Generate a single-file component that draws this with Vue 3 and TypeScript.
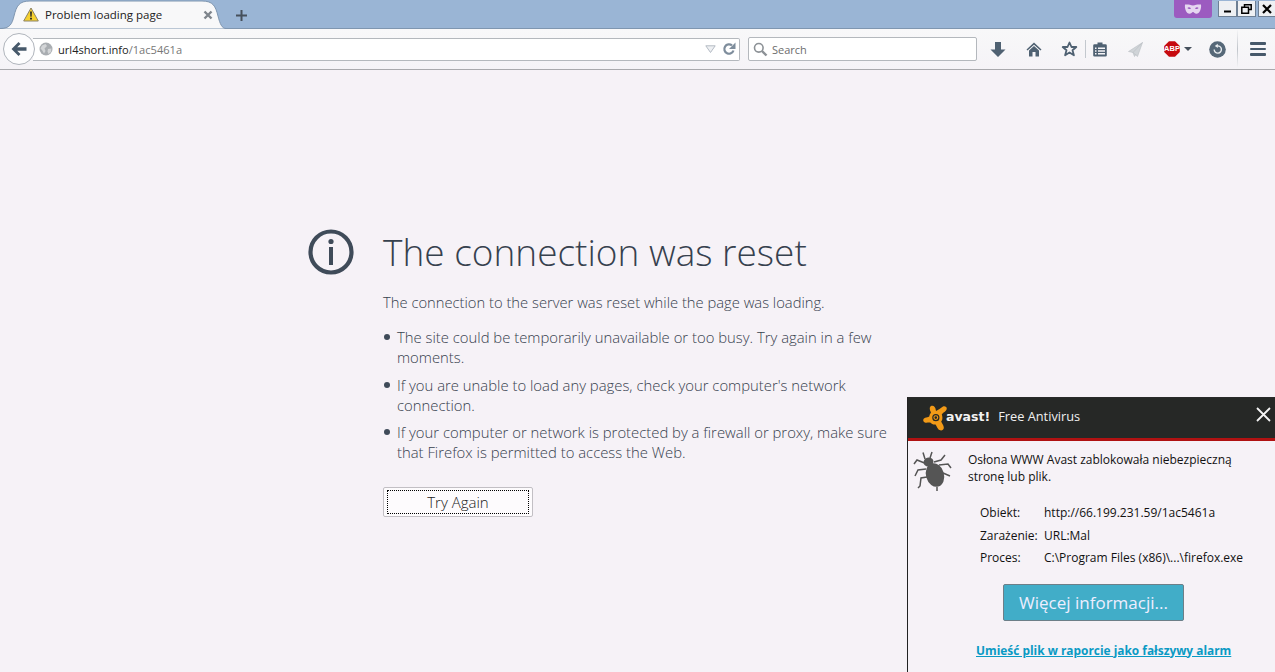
<script setup lang="ts">
const causes: string[] = [
  'The site could be temporarily unavailable or too busy. Try again in a few moments.',
  "If you are unable to load any pages, check your computer's network connection.",
  'If your computer or network is protected by a firewall or proxy, make sure that Firefox is permitted to access the Web.',
]
const details: [string, string][] = [
  ['Obiekt:', 'http://66.199.231.59/1ac5461a'],
  ['Zarażenie:', 'URL:Mal'],
  ['Proces:', 'C:\\Program Files (x86)\\...\\firefox.exe'],
]
</script>

<template>
  <div class="window">
    <header class="tabstrip">
      <div class="tab">
        <svg class="tab-shape" width="226" height="29" viewBox="0 0 226 29">
          <path d="M0 28.5C10 28.5 12 24 14 16C16.5 6 19 1 30 1H202C213 1 215.5 6 218 16C220 24 222 28.5 226 28.5" fill="#f8f8f9" stroke="#7f96b0" />
        </svg>
        <svg class="warn" width="16" height="15" viewBox="0 0 16 15">
          <path d="M8 1L15.3 14H.7Z" fill="#f6d12f" stroke="#8a8266" stroke-linejoin="round" />
          <path d="M7.1 4.6H8.9L8.6 9.8H7.4ZM7.1 10.8H8.9V12.5H7.1Z" fill="#222" />
        </svg>
        <span class="tab-title">Problem loading page</span>
        <svg class="tab-close" width="10" height="10" viewBox="0 0 10 10">
          <path d="M1.5 1.5L8.5 8.5M8.5 1.5L1.5 8.5" stroke="#7f858c" stroke-width="2.4" />
        </svg>
      </div>
      <svg class="newtab" width="11" height="11" viewBox="0 0 11 11">
        <path d="M5.5 0V11M0 5.5H11" stroke="#46505c" stroke-width="2" />
      </svg>
      <div class="win-spacer"></div>
      <div class="private">
        <svg width="18" height="10" viewBox="0 0 18 10">
          <path fill-rule="evenodd" d="M1 .6C4 .2 6.5 1 9 1.6C11.5 1 14 .2 17 .6C17.6 5 15.6 9.8 12.4 9.8C10.8 9.8 10 8 9 8C8 8 7.2 9.8 5.6 9.8C2.4 9.8 .4 5 1 .6ZM3.4 4C4.2 3 6 3 7 4.4C5.8 5.4 4.2 5.2 3.4 4ZM14.6 4C13.8 3 12 3 11 4.4C12.2 5.4 13.8 5.2 14.6 4Z" fill="#e6d6f0" />
        </svg>
      </div>
      <div class="caption">
        <button class="cap-btn">
          <svg width="9" height="9" viewBox="0 0 9 9"><path d="M1 7.5H8" stroke="#000" stroke-width="2" /></svg>
        </button>
        <button class="cap-btn">
          <svg width="11" height="10" viewBox="0 0 11 10"><path d="M3.5 2.5V.8H10.2V5.5H8M.8 3.2H7.5V9.2H.8Z" fill="none" stroke="#000" stroke-width="1.5" /></svg>
        </button>
        <button class="cap-btn cap-close">
          <svg width="10" height="10" viewBox="0 0 10 10"><path d="M1 1L9 9M9 1L1 9" stroke="#000" stroke-width="2.2" /></svg>
        </button>
      </div>
    </header>

    <nav class="toolbar">
      <button class="back">
        <svg width="16" height="14" viewBox="0 0 16 14"><path d="M7.5 0L.5 7L7.5 14L9.5 12L6.2 8.7H15.5V5.3H6.2L9.5 2Z" fill="#46586a" /></svg>
      </button>
      <div class="urlbar">
        <svg class="globe" width="14" height="14" viewBox="0 0 14 14">
          <circle cx="7" cy="7" r="6.5" fill="#a9adb1" />
          <path d="M3 3.5L6.5 2L8 4L5.5 6.5L6.5 9L5 11.5L3 8L1.5 6.5ZM9 7L12.5 6.5L12 10L9.5 12L8.5 9.5Z" fill="#d3d5d7" />
        </svg>
        <span class="host">url4short.info</span><span class="path">/1ac5461a</span>
        <span class="url-grow"></span>
        <svg class="drop" width="11" height="8" viewBox="0 0 11 8"><path d="M.8.8H10.2L5.5 7.5Z" fill="#eef0f3" stroke="#b4bbc4" /></svg>
        <svg class="reload" width="14" height="14" viewBox="0 0 14 14">
          <path d="M11.5 8.5A4.7 4.7 0 1 1 10 3.4" fill="none" stroke="#7e8d9c" stroke-width="2.2" />
          <path d="M13.5 .5V7H7Z" fill="#7e8d9c" />
        </svg>
      </div>
      <div class="searchbar">
        <svg width="15" height="15" viewBox="0 0 15 15">
          <circle cx="5.8" cy="5.8" r="4.3" fill="none" stroke="#8c9196" stroke-width="1.6" />
          <path d="M9 9L13.5 13.5" stroke="#8c9196" stroke-width="2.4" />
        </svg>
        <span>Search</span>
      </div>
      <div class="tools">
        <svg class="t t-down" width="16" height="17" viewBox="0 0 16 17"><path d="M5 1H11V8.5H15.5L8 16L.5 8.5H5Z" fill="#4f6172" /></svg>
        <svg class="t t-home" width="16" height="15" viewBox="0 0 16 15"><path d="M8 .5L15.5 7.5L14.5 8.5L8 2.7L1.5 8.5L.5 7.5Z" fill="#4f6172" /><path d="M3 8.5L8 4L13 8.5V14.5H9.5V10H6.5V14.5H3Z" fill="#4f6172" /></svg>
        <svg class="t t-star" width="17" height="16" viewBox="0 0 17 16"><path d="M8.5 1.5L10.5 6H15.3L11.5 9.2L12.9 14.3L8.5 11.5L4.1 14.3L5.5 9.2L1.7 6H6.5Z" fill="none" stroke="#4f6172" stroke-width="1.8" stroke-linejoin="round" /></svg>
        <span class="t-sep"></span>
        <svg class="t t-list" width="14" height="15" viewBox="0 0 14 15"><path fill-rule="evenodd" d="M4.5 2.2V.5H9.5V2.2H12.5Q13.8 2.2 13.8 3.5V13.5Q13.8 14.5 12.5 14.5H1.5Q.2 14.5 .2 13.5V3.5Q.2 2.2 1.5 2.2ZM2 5.5V7H3.5V5.5ZM2 8.2V9.7H3.5V8.2ZM2 10.9V12.4H3.5V10.9ZM5 5.5V7H12V5.5ZM5 8.2V9.7H12V8.2ZM5 10.9V12.4H12V10.9Z" fill="#4f6172" /></svg>
        <svg class="t t-send" width="15" height="15" viewBox="0 0 15 15"><path d="M14.5 .5L.5 9.5L5 10.5L9.5 14.5ZM14.5 .5L5 10.5L6.5 14.5L7.8 12.5" fill="#d0d4d8" stroke="#b8bdc3" stroke-width=".6" /></svg>
        <div class="t t-abp">
          <svg width="16" height="16" viewBox="0 0 16 16"><path d="M5 .2H11L15.8 5V11L11 15.8H5L.2 11V5Z" fill="#c60a0f" /></svg>
          <span class="abp-label">ABP</span>
        </div>
        <svg class="t-caret" width="8" height="4" viewBox="0 0 8 4"><path d="M0 0H8L4 4Z" fill="#46505c" /></svg>
        <svg class="t t-hist" width="17" height="17" viewBox="0 0 17 17">
          <circle cx="8.5" cy="8.5" r="8.3" fill="#566878" />
          <path d="M5.2 8.5A3.6 3.6 0 1 0 8 5" fill="none" stroke="#e9edf0" stroke-width="1.4" />
          <path d="M8.8 2.8V7L5.8 5Z" fill="#e9edf0" />
        </svg>
        <span class="t-sep2"></span>
        <div class="t-menu"><i></i><i></i><i></i></div>
      </div>
    </nav>

    <main class="page">
      <div class="error">
        <svg class="info" width="46" height="46" viewBox="0 0 46 46">
          <circle cx="23" cy="23" r="20.5" fill="none" stroke="#3f4b59" stroke-width="4.2" />
          <circle cx="23" cy="12.5" r="2.6" fill="#3f4b59" />
          <rect x="21" y="18" width="4" height="18" fill="#3f4b59" />
        </svg>
        <div class="copy">
          <h1>The connection was reset</h1>
          <p>The connection to the server was reset while the page was loading.</p>
          <ul>
            <li v-for="c in causes" :key="c">{{ c }}</li>
          </ul>
          <button class="retry"><span>Try Again</span></button>
        </div>
      </div>
    </main>

    <aside class="avast">
      <div class="av-head">
        <svg class="av-logo" width="26" height="26" viewBox="0 0 26 26">
          <path fill-rule="evenodd" d="M8 1C10.5 0 12.5 2 12.8 5L13 6C15.5 5 17.5 3 20 1.5C22.8 .5 25 3 23 5.5C21.5 7.2 19.5 8 18.8 9.5C19.8 12 19.5 15 18.2 16.5C19 18.5 21 20.5 20.8 23C20.5 25.8 17 26.3 15.2 24C13.8 22.3 13.5 20.5 12.5 19.5C10.5 19.8 8.5 19 7.2 17.5C5.5 17.3 3.5 18 1.8 17.5C-.4 16.5 -.3 13.5 2.2 12.8C3.8 12.3 5 12.3 6.2 11.5C6.4 10 7 8.7 8 7.5C7 6 5.8 2.5 8 1ZM12.8 9A3.6 3.6 0 1 0 12.9 16.2A3.6 3.6 0 1 0 12.8 9Z" fill="#f29a17" />
          <circle cx="12.8" cy="12.6" r="1.9" fill="none" stroke="#f29a17" stroke-width="1.1" />
        </svg>
        <span class="av-brand">avast!</span>
        <span class="av-product">Free Antivirus</span>
        <svg class="av-close" width="15" height="15" viewBox="0 0 15 15"><path d="M1 1L14 14M14 1L1 14" stroke="#f4f4f4" stroke-width="1.8" /></svg>
      </div>
      <div class="av-body">
        <div class="av-msg">
          <svg class="bug" width="42" height="42" viewBox="0 0 42 42">
            <ellipse cx="23" cy="25" rx="9" ry="12" transform="rotate(-16 23 25)" fill="#555" />
            <ellipse cx="16.5" cy="12" rx="5" ry="4.5" transform="rotate(-16 16.5 12)" fill="#555" />
            <path d="M13 9L11 2.5M18 8L20 2M12.5 13L5 10L2 14M14 19L6 20L3 26M15 27L9 28L8 36L6 38M22 12L29 10L33 5M27 15L36 14L39 18M31 23L38 26M25 37L25 41" fill="none" stroke="#555" stroke-width="1.5" />
          </svg>
          <p>Osłona WWW Avast zablokowała niebezpieczną stronę lub plik.</p>
        </div>
        <dl class="av-details">
          <template v-for="d in details" :key="d[0]">
            <dt>{{ d[0] }}</dt>
            <dd>{{ d[1] }}</dd>
          </template>
        </dl>
        <button class="av-more">Więcej informacji...</button>
        <a class="av-link">Umieść plik w raporcie jako fałszywy alarm</a>
      </div>
    </aside>
  </div>
</template>

<style>
html, body { margin: 0; height: 100%; overflow: hidden; background: #f6f2f7; }
</style>

<style scoped>
.window { height: 672px; display: flex; flex-direction: column; position: relative; overflow: hidden; font-family: "Open Sans", "Noto Sans", sans-serif; background: #f6f2f7; }
button { padding: 0; font-family: inherit; }
.tabstrip { height: 28px; flex: none; display: flex; align-items: flex-start; background: #9ab5d5; border-bottom: 1px solid #7f96b0; box-sizing: content-box; position: relative; z-index: 1; }
.tab { width: 226px; height: 29px; position: relative; display: flex; align-items: center; flex: none; }
.tab-shape { position: absolute; left: 0; top: 0; }
.warn, .tab-title, .tab-close { position: relative; }
.warn { margin-left: 23px; }
.tab-title { margin-left: 6px; font-size: 11.5px; color: #222; white-space: nowrap; width: 158px; }
.newtab { margin: 10px 0 0 10px; }
.win-spacer { flex: 1; }
.private { width: 38px; height: 18px; background: #9c5bc0; border-radius: 0 0 3px 3px; display: flex; align-items: center; justify-content: center; margin-right: 6px; }
.caption { display: flex; margin-top: 1px; }
.cap-btn { width: 19px; height: 16px; background: #eef0f3; border: 1px solid #6d7f94; border-top: 0; display: flex; align-items: center; justify-content: center; }
.cap-close { width: 17px; border-right: 0; margin-left: 2px; }
.toolbar { height: 40px; flex: none; display: flex; align-items: center; background: linear-gradient(#f8f8f9, #f5f3f7); border-bottom: 1px solid #a9a9ad; position: relative; }
.back { width: 32px; height: 32px; border-radius: 50%; margin-left: 3px; background: #fdfdfe; border: 1px solid #b0b5bc; display: flex; align-items: center; justify-content: center; position: relative; z-index: 1; flex: none; }
.urlbar { margin-left: -2px; width: 707px; height: 23px; box-sizing: border-box; border: 1px solid #b4b8bd; border-left: 0; background: #fff; border-radius: 0 2px 2px 0; display: flex; align-items: center; padding: 0 3px 0 6px; font-size: 11.1px; flex: none; }
.globe { margin-right: 5px; }
.host { color: #222; }
.path { color: #777; }
.url-grow { flex: 1; }
.drop { margin-right: 6px; }
.searchbar { margin-left: 8px; width: 229px; height: 24px; box-sizing: border-box; border: 1px solid #b4b8bd; border-radius: 2px; background: #fff; display: flex; align-items: center; padding: 0 4px; gap: 4px; font-size: 11px; color: #6d6d6d; flex: none; }
.tools { display: flex; align-items: center; height: 100%; position: relative; flex: 1; }
.t { flex: none; }
.t-down { margin-left: 13px; }
.t-home { margin-left: 20px; }
.t-star { margin-left: 19px; }
.t-sep { width: 1px; height: 18px; background: #c3c8ce; margin-left: 7px; flex: none; }
.t-list { margin-left: 7px; }
.t-send { margin-left: 21px; }
.t-abp { margin-left: 21px; position: relative; width: 16px; height: 16px; }
.t-abp svg { display: block; }
.abp-label { position: absolute; left: 0; right: 0; top: 3px; text-align: center; font: bold 7.5px/10px "Liberation Sans", sans-serif; color: #fff; }
.t-caret { margin-left: 4px; flex: none; }
.t-hist { margin-left: 17px; }
.t-sep2 { width: 1px; height: 38px; background: linear-gradient(#f5f5f7, #c0c4ca 50%, #f5f5f7); margin-left: 11px; flex: none; }
.t-menu { margin-left: 12px; width: 16px; display: flex; flex-direction: column; gap: 3px; }
.t-menu i { display: block; height: 2.5px; background: #46586a; border-radius: 1px; }
.page { flex: 1; display: flex; justify-content: center; color: #36414e; }
.error { width: 580px; display: flex; padding-top: 157px; margin-left: 1px; margin-right: 72px; }
.info { flex: none; margin-right: 29px; margin-top: 2px; margin-left: -4px; }
.copy { flex: 1; min-width: 0; font-weight: 300; }
h1 { margin: 0; font-size: 37px; line-height: 50px; font-weight: 300; white-space: nowrap; }
p { margin: 0; }
.copy p { margin-top: 15px; font-size: 14.75px; line-height: 20px; white-space: nowrap; }
ul { margin: 15px 0 0; padding: 0 0 0 14px; list-style: none; width: 495px; }
li { position: relative; font-size: 14.85px; line-height: 20px; margin-bottom: 7.5px; }
li::before { content: ""; position: absolute; left: -13px; top: 7px; width: 6px; height: 6px; border-radius: 50%; background: #3f4b59; }
.retry { margin-top: 25px; width: 150px; height: 30px; display: flex; padding: 2px 3px; box-sizing: border-box; background: #fdfbfd; border: 1px solid #c2bfc4; border-radius: 2px; font-size: 15px; font-weight: 300; color: #222; }
.retry span { flex: 1; border: 1px dotted #000; line-height: 22px; }
.avast { position: absolute; left: 907px; right: 0; top: 397px; bottom: 0; border-left: 1px solid #222; border-top: 1px solid #2a2a2a; background: #f6f2f7; }
.av-head { background: #262826; border-bottom: 3px solid #b01212; display: flex; align-items: center; position: relative; color: #f0f0f0; padding-bottom: 1px; height: 39px; box-sizing: content-box; }
.av-logo { margin-left: 15px; flex: none; margin-top: 1px; }
.av-brand { font-family: "DejaVu Sans", sans-serif; font-weight: bold; font-size: 12.5px; margin-left: -3px; margin-bottom: 2px; color: #f2f2f2; }
.av-product { margin-left: 8px; margin-bottom: 3px; font-size: 12.8px; }
.av-close { position: absolute; right: 4px; top: 9px; }
.av-body { display: flex; flex-direction: column; font-size: 12px; color: #111; }
.av-msg { display: flex; padding: 9px 0 0 4px; }
.bug { flex: none; }
.av-msg p { margin: 1px 0 0 14px; width: 275px; line-height: 17px; font-size: 12px; }
.av-details { margin: 12px 0 0; padding-left: 72px; display: grid; grid-template-columns: 64px 1fr; grid-auto-rows: 22.5px; }
.av-details dd { margin: 0; white-space: nowrap; }
.av-more { width: 181px; height: 37px; margin: 12px 0 0 95px; background: #41adc8; border: 1px solid #6d7f88; border-radius: 2px; color: #eef; font-size: 17px; }
.av-link { margin: 21px 0 0 68px; font-weight: 700; font-size: 11.9px; color: #0a9ac4; text-decoration: underline; white-space: nowrap; }
</style>
